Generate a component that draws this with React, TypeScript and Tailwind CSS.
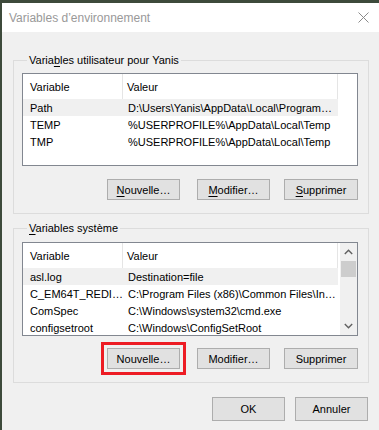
import React from "react";

const FONT = "font-['Liberation_Sans',Arial,sans-serif]";

function Btn({ children, className = "" }: { children: React.ReactNode; className?: string }) {
  return (
    <div
      className={`relative h-[21px] w-[73px] shrink-0 bg-[#e1e1e1] border border-[#adadad] flex items-center justify-center text-black ${className}`}
    >
      {children}
    </div>
  );
}

function U({ children }: { children: React.ReactNode }) {
  return <span className="underline underline-offset-[2px]">{children}</span>;
}

type Row = [string, string];

function ListView({ rows, height, scroll }: { rows: Row[]; height: string; scroll?: boolean }) {
  return (
    <div className={`relative w-[336px] ${height} bg-white border border-[#828790] overflow-hidden`}>
      <div className="flex h-[25px] w-[315px] border-r border-[#e5e5e5]">
        <div className="w-[100px] border-r border-[#e5e5e5] pl-[7px] flex items-center">Variable</div>
        <div className="flex-1 pl-[4px] flex items-center">Valeur</div>
      </div>
      {rows.map(([k, v], i) => (
        <div key={k} className={`flex h-[17px] w-[315px] items-center ${i === 0 ? "bg-[#f0f0f0]" : ""}`}>
          <div className="w-[100px] pl-[7px] whitespace-nowrap overflow-hidden">{k}</div>
          <div className="flex-1 pl-[5px] whitespace-nowrap overflow-hidden">{v}</div>
        </div>
      ))}
      {scroll && (
        <div className="absolute right-0 top-0 bottom-0 w-[17px] bg-[#f0f0f0] flex flex-col items-center">
          <div className="h-[17px] w-full flex items-center justify-center">
            <svg width="9" height="6" viewBox="0 0 9 6">
              <path d="M0.8 5 L4.5 1.3 L8.2 5" fill="none" stroke="#606060" strokeWidth="1.4" />
            </svg>
          </div>
          <div className="mt-[1px] h-[16px] w-[15px] bg-[#cdcdcd]" />
          <div className="flex-1" />
          <div className="h-[17px] w-full flex items-center justify-center mb-[1px]">
            <svg width="9" height="6" viewBox="0 0 9 6">
              <path d="M0.8 1 L4.5 4.7 L8.2 1" fill="none" stroke="#606060" strokeWidth="1.4" />
            </svg>
          </div>
        </div>
      )}
    </div>
  );
}

export default function App() {
  const userRows: Row[] = [
    ["Path", "D:\\Users\\Yanis\\AppData\\Local\\Program…"],
    ["TEMP", "%USERPROFILE%\\AppData\\Local\\Temp"],
    ["TMP", "%USERPROFILE%\\AppData\\Local\\Temp"],
  ];
  const sysRows: Row[] = [
    ["asl.log", "Destination=file"],
    ["C_EM64T_REDI…", "C:\\Program Files (x86)\\Common Files\\In…"],
    ["ComSpec", "C:\\Windows\\system32\\cmd.exe"],
    ["configsetroot", "C:\\Windows\\ConfigSetRoot"],
  ];
  return (
    <div className={`w-[379px] h-[430px] bg-[#3d4a3b] overflow-hidden text-[11px] leading-[16px] text-black ${FONT}`}>
      <div className="ml-[2px] mt-[3px] w-[377px] h-[427px] bg-[#f0f0f0] flex flex-col">
        <div className="h-[29px] bg-white flex items-center justify-between pl-[7px] pr-[10px] shrink-0">
          <span className="text-[#999999] text-[12px]">Variables d’environnement</span>
          <svg width="11" height="11" viewBox="0 0 11 11">
            <path d="M0.5 0.5 L10.5 10.5 M10.5 0.5 L0.5 10.5" stroke="#8a8a8a" strokeWidth="1" />
          </svg>
        </div>

        <fieldset className="ml-[11px] mt-[20px] w-[356px] border border-[#dcdcdc] pl-[8px] pb-[13px]">
          <legend className="ml-[5px] px-[2px] h-[16px]">
            Varia<U>b</U>les utilisateur pour Yanis
          </legend>
          <div className="mt-[5px]">
            <ListView rows={userRows} height="h-[93px]" />
          </div>
          <div className="mt-[13px] flex">
            <Btn className="ml-[85px]">
              <span><U>N</U>ouvelle…</span>
            </Btn>
            <Btn className="ml-[17px]">
              <span><U>M</U>odifier…</span>
            </Btn>
            <Btn className="ml-[14px] w-[74px]">
              <span><U>S</U>upprimer</span>
            </Btn>
          </div>
        </fieldset>

        <fieldset className="ml-[11px] mt-[6px] w-[356px] border border-[#dcdcdc] pl-[8px] pb-[13px]">
          <legend className="ml-[5px] px-[2px] h-[16px]">
            <U>V</U>ariables système
          </legend>
          <div className="mt-[6px]">
            <ListView rows={sysRows} height="h-[94px]" scroll />
          </div>
          <div className="mt-[12px] flex">
            <Btn className="ml-[85px]">
              <span>Nouvelle…</span>
              <div className="absolute -left-[7px] -right-[7px] -top-[7px] -bottom-[7px] border-[3px] border-[#ed1c24]" />
            </Btn>
            <Btn className="ml-[17px]">
              <span>Modifier…</span>
            </Btn>
            <Btn className="ml-[14px] w-[74px]">
              <span>Supprimer</span>
            </Btn>
          </div>
        </fieldset>

        <div className="mt-[14px] flex justify-end pr-[11px]">
          <Btn className="h-[24px]">OK</Btn>
          <Btn className="ml-[10px] h-[24px]">Annuler</Btn>
        </div>
      </div>
    </div>
  );
}
